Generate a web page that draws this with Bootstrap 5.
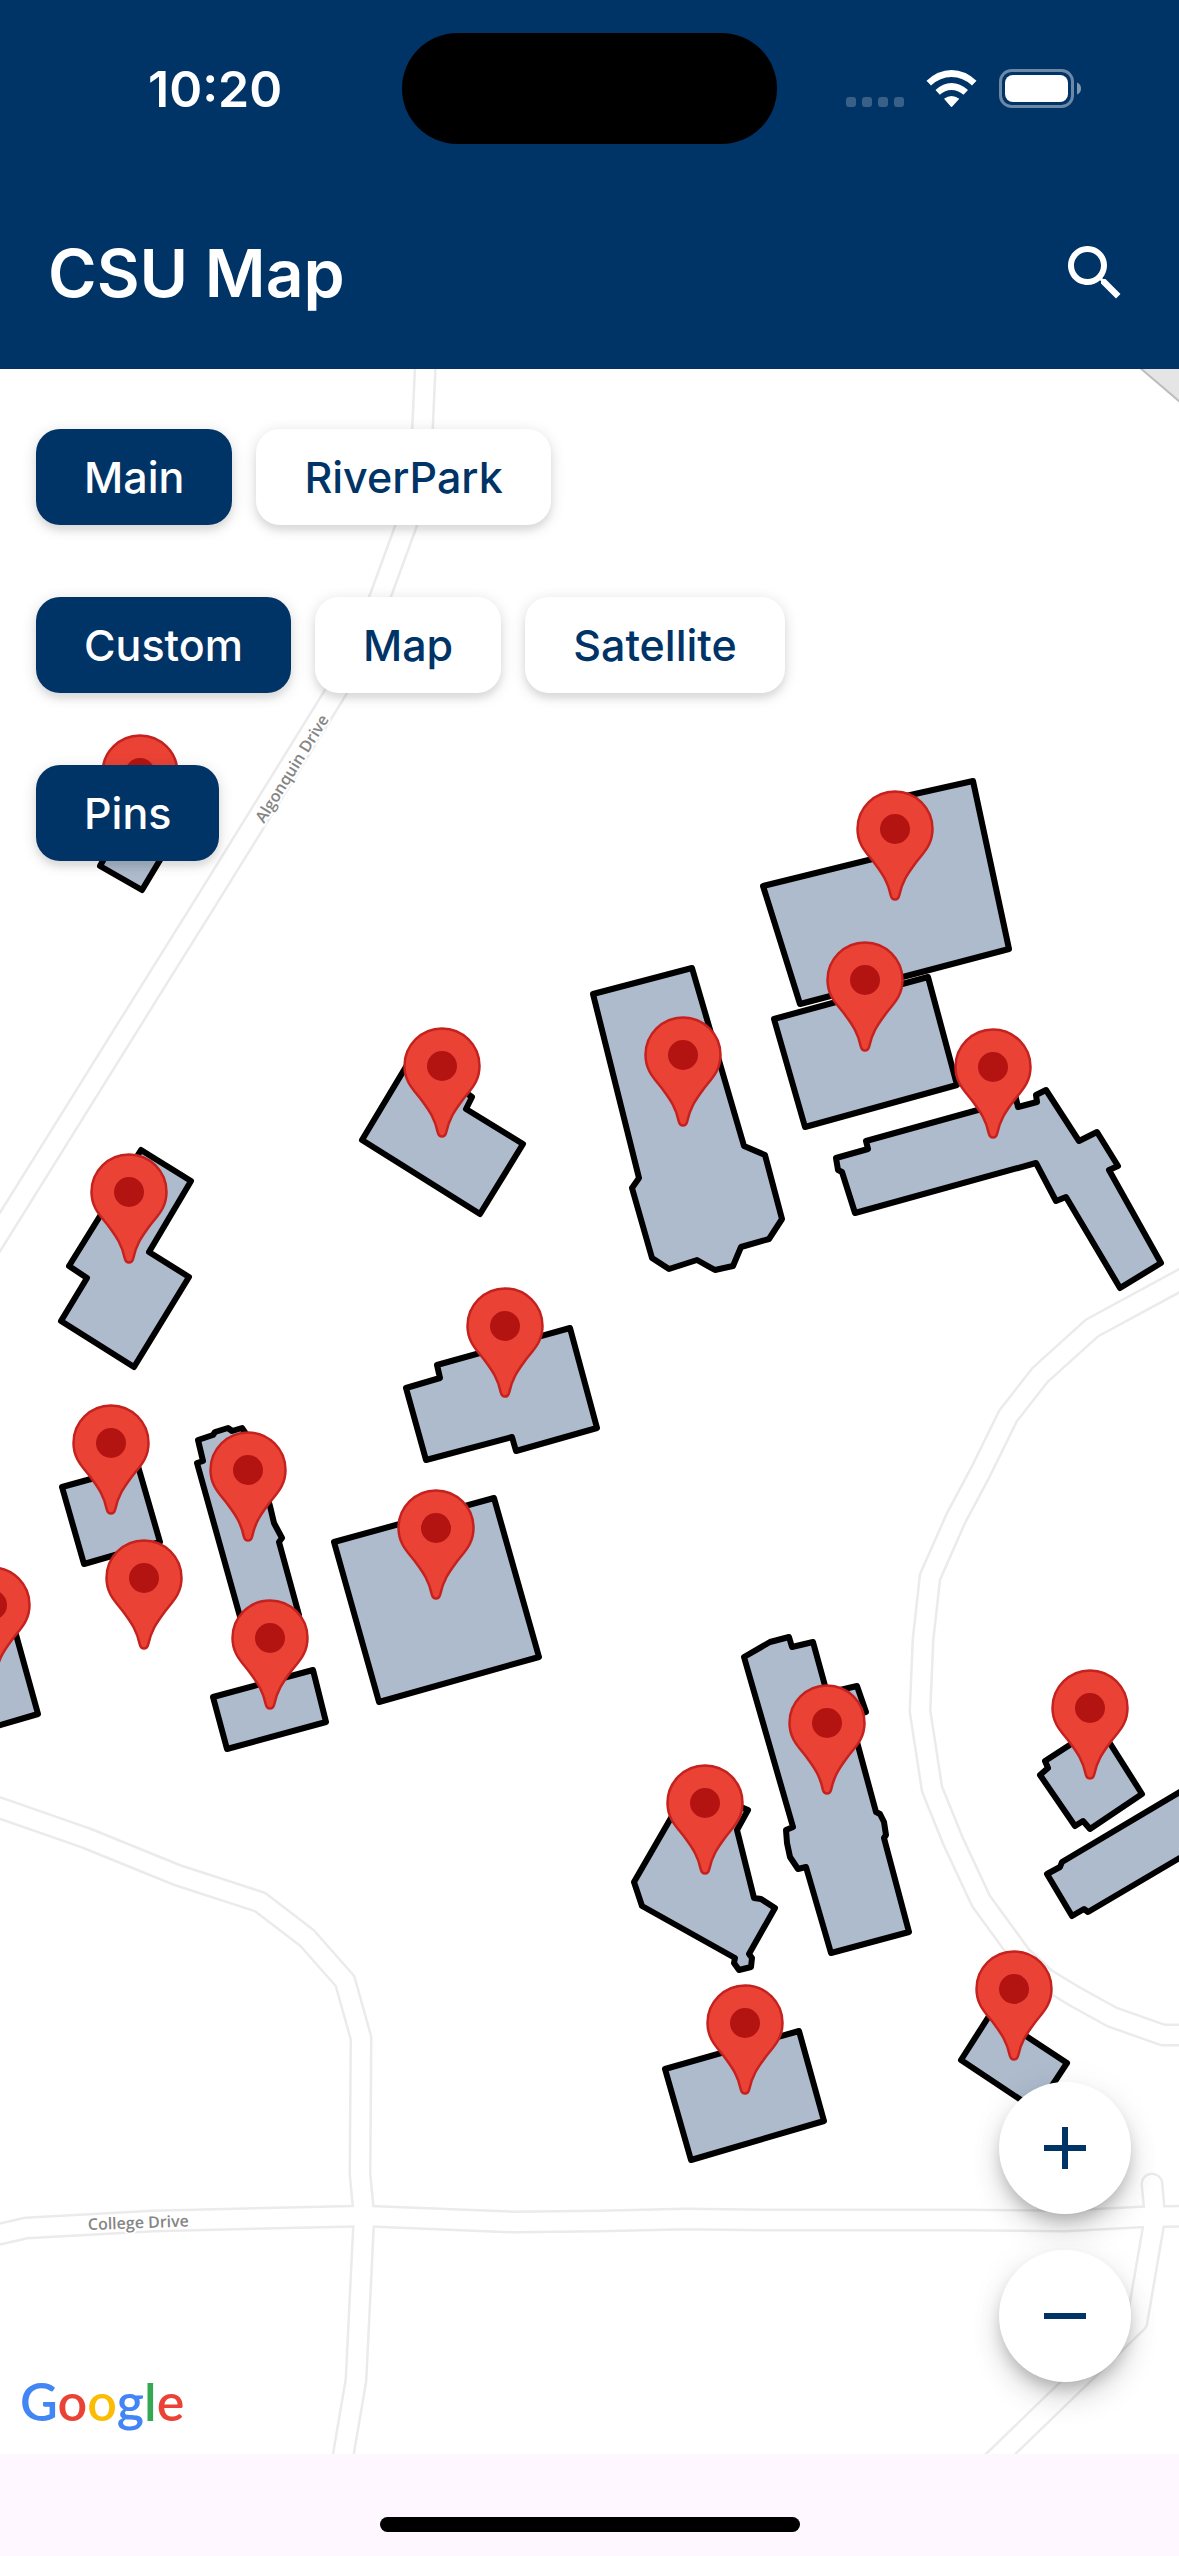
<!DOCTYPE html>
<html lang="en">
<head>
<meta charset="utf-8">
<meta name="viewport" content="width=device-width, initial-scale=1">
<title>CSU Map</title>
<link href="https://cdn.jsdelivr.net/npm/bootstrap@5.3.0/dist/css/bootstrap.min.css" rel="stylesheet">
<style>
  :root { --navy: #003366; }
  body { font-family: Inter, Roboto, "Liberation Sans", sans-serif; background: #fef7ff; }
  .app-head { background: var(--navy); color: #fff; }
  .status-row { height: 177px; }
  .clock { padding-left: 148px; font-size: 50px; font-weight: 600; line-height: 60px; }
  .island { width: 375px; height: 111px; background: #000; }
  .indicators { padding-right: 98px; }
  .title-row { height: 192px; padding: 0 48px; }
  .app-title { font-size: 66px; font-weight: 600; line-height: 80px; }
  .icon-btn { border: 0; background: none; padding: 0; color: inherit; line-height: 0; }
  .map-area { background: #fff; min-height: 1200px; }
  .overlay { padding: 60px 36px; gap: 72px; pointer-events: none; }
  .overlay > * { pointer-events: auto; }
  .chip-row { gap: 24px; }
  .chip { height: 96px; padding: 0 48px; border: 0; border-radius: 24px; background: #fff; color: var(--navy);
    font-size: 43px; font-weight: 500; line-height: 48px;
    box-shadow: 0 6px 6px rgba(0,0,0,.06), 0 3px 15px rgba(0,0,0,.14); }
  .chip.active { background: var(--navy); color: #fff; }
  .zoom-stack { right: 48px; bottom: 72px; gap: 36px; }
  .fab { width: 132px; height: 132px; border: 0; padding: 0; background: #fff; color: var(--navy); line-height: 0;
    box-shadow: 0 9px 15px -3px rgba(0,0,0,.2), 0 18px 30px rgba(0,0,0,.12), 0 3px 36px rgba(0,0,0,.06); }
  .brand { left: 20px; bottom: 23px; font-family: Lato, sans-serif; font-size: 52px; font-weight: 600; line-height: 60px; }
  .g-blue { color: #4285f4; } .g-red { color: #ea4335; } .g-yellow { color: #fbbc04; } .g-green { color: #34a853; }
  .home-area { height: 102px; padding-bottom: 24px; }
  .home-bar { width: 420px; height: 15px; background: #000; }
  .road-edge { stroke: #ebebeb; stroke-width: 23px; }
  .road-fill { stroke: #fff; stroke-width: 18px; }
  .building { fill: #adbbcd; stroke: #000; stroke-width: 6px; stroke-linejoin: round; }
  .street { font-family: "Open Sans", "Noto Sans", sans-serif; font-size: 16px; font-weight: 600; fill: #858585; stroke: #fff; stroke-width: 4px; paint-order: stroke; }
</style>
<script src="https://cdn.jsdelivr.net/npm/bootstrap@5.3.0/dist/js/bootstrap.bundle.min.js"></script>
</head>
<body class="d-flex flex-column min-vh-100">

<header class="app-head">
  <div class="status-row d-flex align-items-center">
    <div class="clock flex-fill w-25">10:20</div>
    <div class="island rounded-pill flex-shrink-0"></div>
    <div class="indicators flex-fill w-25 d-flex justify-content-end">
      <svg width="235" height="39" viewBox="0 0 235 39" aria-label="Wi-Fi and battery">
        <g fill="#fff" opacity=".22">
          <rect x="0" y="28" width="10" height="10" rx="3"/><rect x="16" y="28" width="10" height="10" rx="3"/>
          <rect x="32" y="28" width="10" height="10" rx="3"/><rect x="48" y="28" width="10" height="10" rx="3"/>
        </g>
        <g fill="#fff">
          <path d="M80.500 11.800Q92 1 105.500 1T130.500 11.800L126 16.500Q117 8 105.500 8T85 16.500Z"/>
          <path d="M89.500 21Q97 14 105.500 14T122 21L117.500 25.800Q112 21 105.500 21T93.800 25.800Z"/>
          <path d="M98 29.800Q105.500 24 113.300 29.800L106.500 37.300Q105.500 38.500 104.500 37.300Z"/>
        </g>
        <rect x="154.500" y="1.500" width="72" height="36" rx="11" fill="none" stroke="#fff" stroke-opacity=".42" stroke-width="3"/>
        <rect x="159" y="6" width="63" height="27" rx="8" fill="#fff"/>
        <path d="M231 13.500Q235 15 235 19.500T231 25.500Z" fill="#fff" opacity=".5"/>
      </svg>
    </div>
  </div>
  <div class="title-row d-flex align-items-center justify-content-between">
    <h1 class="app-title m-0">CSU Map</h1>
    <button class="icon-btn" type="button" aria-label="Search">
      <svg width="72" height="72" viewBox="0 0 24 24" fill="currentColor"><path d="M15.500 14h-.79l-.28-.27C15.410 12.590 16 11.110 16 9.500 16 5.910 13.090 3 9.500 3S3 5.910 3 9.500 5.910 16 9.500 16c1.610 0 3.090-.59 4.230-1.570l.27.280v.790l5 4.990L20.490 19l-4.990-5zm-6 0C7.010 14 5 11.990 5 9.500S7.010 5 9.500 5 14 7.010 14 9.500 11.990 14 9.500 14z"/></svg>
    </button>
  </div>
</header>

<main class="map-area position-relative flex-grow-1 overflow-hidden">
  <svg class="position-absolute top-0 start-0 w-100 h-100" viewBox="0 369 1179 2085" preserveAspectRatio="xMidYMin slice" role="img" aria-label="Campus map">
    <defs>
      <g id="pin">
        <path d="M0 70.500C-2.500 70.500-3.600 69-4.200 66.500C-7 53-12.500 45-19.500 35.500C-27 25-37.500 17-37.500 0A37.500 37.500 0 0 1 37.500 0C37.500 17 27 25 19.500 35.500C12.500 45 7 53 4.200 66.500C3.600 69 2.500 70.500 0 70.500Z" fill="#ea4335" stroke="#c5221f" stroke-width="2.500"/>
        <circle r="15" fill="#b31412"/>
      </g>
      <g id="roads" fill="none" stroke-linejoin="round">
        <path d="M426 350L422 440L410 515L380 597L337 690L207 900L157 980L-20 1264"/>
        <path d="M-20 1802L0 1808L86 1838L177 1875L260 1902L307 1938L345 1981L361 2038L360 2174L364 2216L356 2380L340 2474"/>
        <path d="M-20 2238L0 2234L26 2228L153 2221L364 2216L513 2222L600 2221L686 2219L770 2220L860 2220L960 2220L1065 2221L1140 2217L1199 2216"/>
        <path d="M1152 2184L1155 2217L1137 2322L980 2474" stroke-linecap="round"/>
        <path d="M1199 1270L1092 1328L1040 1375L1008 1416L980 1473L956 1518L930 1577L923 1640L920 1711L932 1789L953 1841L981 1901L1021 1956L1046 1979L1074 1996L1112 2017L1163 2035L1199 2035"/>
      </g>
    </defs>

    <path d="M1139 367L1200 419V350Z" fill="#e5e5e5" stroke="#bdbdbd" stroke-width="2"/>
    <use href="#roads" class="road-edge"/>
    <use href="#roads" class="road-fill"/>
    <text class="street" transform="translate(264 824) rotate(-58)">Algonquin Drive</text>
    <text class="street" transform="translate(88 2230) rotate(-2)">College Drive</text>

    <g class="building">
      <path d="M100 866L120 830H178L142 890Z"/>
      <path d="M763 886L893 854L888 800L973 781L1009 949L800 1004Z"/>
      <path d="M774 1019L928 977L957 1085L805 1127Z"/>
      <path d="M593 994L692 968L744 1146L765 1155L782 1219L769 1239L741 1247L733 1266L715 1270L697 1260L669 1269L652 1258L632 1188L639 1178Z"/>
      <path d="M836 1158L868 1149L866 1141L1014 1100L1014 1090L1018 1107L1037 1102L1036 1095L1046 1090L1079 1141L1097 1132L1118 1166L1109 1170L1161 1263L1120 1288L1066 1197L1056 1201L1036 1163L855 1213L842 1172L838 1170Z"/>
      <path d="M362 1140L413 1055L472 1097L466 1109L523 1144L480 1214Z"/>
      <path d="M141 1150L191 1181L149 1252L189 1277L134 1367L61 1321L87 1278L69 1266Z"/>
      <path d="M406 1388L440 1378L437 1365L570 1328L597 1428L516 1451L512 1437L426 1460Z"/>
      <path d="M334 1542L494 1498L539 1657L379 1702Z"/>
      <path d="M62 1487L138 1466L160 1542L84 1564Z"/>
      <path d="M198 1440L213 1435L215 1432L228 1428L232 1431L242 1428L251 1441L270 1506L274 1523L282 1538L279 1542L299 1615L244 1631L197 1463L203 1461Z"/>
      <path d="M213 1697L313 1670L326 1722L227 1749Z"/>
      <path d="M-20 1602L7 1602L38 1714L-20 1731Z"/>
      <path d="M744 1657L770 1642L789 1637L792 1647L813 1642L827 1693L857 1686L866 1712L850 1716L876 1812L880 1814L884 1822L886 1835L884 1838L909 1932L831 1953L806 1867L798 1869L790 1857L787 1843L786 1830L793 1827Z"/>
      <path d="M634 1882L690 1785L748 1810L737 1830L754 1898L761 1899L775 1908L749 1954L752 1958L751 1967L739 1970L734 1963L735 1958L642 1906Z"/>
      <path d="M665 2069L799 2031L824 2121L691 2160Z"/>
      <path d="M961 2060L991 2013L1067 2063L1036 2110Z"/>
      <path d="M1045 1761L1099 1726L1142 1794L1090 1829L1083 1821L1075 1826L1040 1775L1048 1768Z"/>
      <path d="M1047 1874L1060 1867L1062 1862L1200 1780V1846L1088 1912L1084 1909L1072 1916Z"/>
    </g>

    <use href="#pin" x="140" y="773"/>
    <use href="#pin" x="895" y="829"/>
    <use href="#pin" x="865" y="980"/>
    <use href="#pin" x="683" y="1055"/>
    <use href="#pin" x="993" y="1067"/>
    <use href="#pin" x="442" y="1066"/>
    <use href="#pin" x="129" y="1192"/>
    <use href="#pin" x="505" y="1326"/>
    <use href="#pin" x="111" y="1443"/>
    <use href="#pin" x="248" y="1470"/>
    <use href="#pin" x="436" y="1528"/>
    <use href="#pin" x="144" y="1578"/>
    <use href="#pin" x="-8" y="1605"/>
    <use href="#pin" x="270" y="1638"/>
    <use href="#pin" x="1090" y="1708"/>
    <use href="#pin" x="827" y="1723"/>
    <use href="#pin" x="705" y="1803"/>
    <use href="#pin" x="1014" y="1989"/>
    <use href="#pin" x="745" y="2023"/>
  </svg>

  <div class="overlay position-relative d-flex flex-column">
    <div class="chip-row d-flex flex-wrap" role="group" aria-label="Campus">
      <button class="chip active" type="button" aria-pressed="true">Main</button>
      <button class="chip" type="button">RiverPark</button>
    </div>
    <div class="chip-row d-flex flex-wrap" role="group" aria-label="Map style">
      <button class="chip active" type="button" aria-pressed="true">Custom</button>
      <button class="chip" type="button">Map</button>
      <button class="chip" type="button">Satellite</button>
    </div>
    <div class="chip-row d-flex" role="group" aria-label="Markers">
      <button class="chip active" type="button" aria-pressed="true">Pins</button>
    </div>
  </div>

  <div class="brand position-absolute"><span class="g-blue">G</span><span class="g-red">o</span><span class="g-yellow">o</span><span class="g-blue">g</span><span class="g-green">l</span><span class="g-red">e</span></div>

  <div class="zoom-stack position-absolute d-flex flex-column">
    <button class="fab rounded-circle" type="button" aria-label="Zoom in">
      <svg width="72" height="72" viewBox="0 0 24 24" fill="currentColor"><path d="M19 13h-6v6h-2v-6H5v-2h6V5h2v6h6z"/></svg>
    </button>
    <button class="fab rounded-circle" type="button" aria-label="Zoom out">
      <svg width="72" height="72" viewBox="0 0 24 24" fill="currentColor"><path d="M19 13H5v-2h14z"/></svg>
    </button>
  </div>
</main>

<footer class="home-area d-flex justify-content-center align-items-end">
  <div class="home-bar rounded-pill"></div>
</footer>
</body>
</html>
